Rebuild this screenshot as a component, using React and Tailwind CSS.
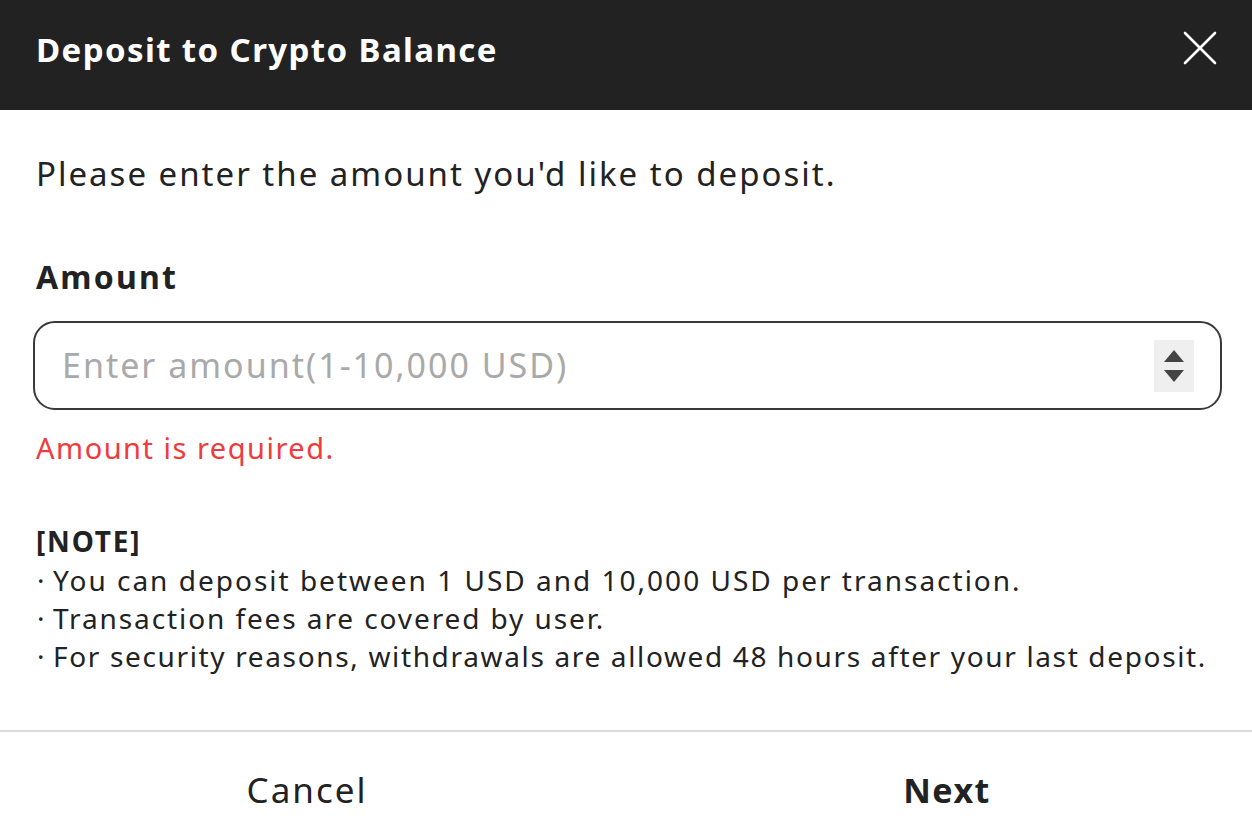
import React from "react";

const notes = [
  "You can deposit between 1 USD and 10,000 USD per transaction.",
  "Transaction fees are covered by user.",
  "For security reasons, withdrawals are allowed 48 hours after your last deposit.",
];

export default function App() {
  return (
    <div className="w-[1252px] h-[838px] bg-white flex flex-col font-['Noto_Sans',sans-serif] text-[#222]">
      {/* header */}
      <div className="h-[110px] bg-[#222222] flex items-center justify-between pl-[36px] pr-[34px] shrink-0">
        <h1 className="text-white text-[33px] font-bold tracking-[1.4px] -mt-[10px]">Deposit to Crypto Balance</h1>
        <button className="text-white -mt-[14px]">
          <svg width="36" height="36" viewBox="0 0 36 36" fill="none" stroke="currentColor" strokeWidth="2.6" strokeLinecap="round">
            <path d="M3 3L33 33M33 3L3 33" />
          </svg>
        </button>
      </div>

      {/* body */}
      <div className="flex-1 px-[36px] pt-[42px]">
        <p className="text-[33px] leading-[44px] tracking-[2px]">Please enter the amount you'd like to deposit.</p>

        <label className="block mt-[61px] text-[32px] font-bold leading-[40px] tracking-[2.2px]">Amount</label>
        <div className="mt-[24px] -ml-[3px] mr-[-6px] h-[89px] border-2 border-[#3a3a3a] rounded-[22px] flex items-center pl-[27px] pr-[26px]">
          <span className="flex-1 text-[34px] text-[#a9a9a9] tracking-[2px]">Enter amount(1-10,000 USD)</span>
          <div className="w-[40px] h-[52px] bg-[#efefef] flex flex-col items-center justify-center gap-[8px]">
            <svg width="20" height="12" viewBox="0 0 20 12"><path d="M10 0L20 12H0Z" fill="#444" /></svg>
            <svg width="20" height="12" viewBox="0 0 20 12"><path d="M0 0H20L10 12Z" fill="#444" /></svg>
          </div>
        </div>
        <p className="mt-[18px] text-[29px] text-[#ef3b3b] leading-[40px] tracking-[1.5px]">Amount is required.</p>

        <div className="mt-[53px] text-[28px] leading-[38px]">
          <p className="font-bold leading-[40px] tracking-[1.8px]">[NOTE]</p>
          <p className="flex whitespace-nowrap tracking-[2px]">
            <span className="w-[17px] shrink-0 pl-[1px]">·</span>
            <span>{notes[0]}</span>
          </p>
          <p className="flex whitespace-nowrap tracking-[1.9px]">
            <span className="w-[17px] shrink-0 pl-[1px]">·</span>
            <span>{notes[1]}</span>
          </p>
          <p className="flex whitespace-nowrap tracking-[1.65px]">
            <span className="w-[17px] shrink-0 pl-[1px]">·</span>
            <span>{notes[2]}</span>
          </p>
        </div>
      </div>

      {/* footer */}
      <div className="h-[108px] border-t-2 border-[#dcdcdc] grid grid-cols-2 shrink-0">
        <button className="text-[35px] text-[#222] pr-[12px] pt-[10px] tracking-[2px]">Cancel</button>
        <button className="text-[34px] font-bold text-[#222] pl-[16px] pt-[10px] tracking-[1.5px]">Next</button>
      </div>
    </div>
  );
}
